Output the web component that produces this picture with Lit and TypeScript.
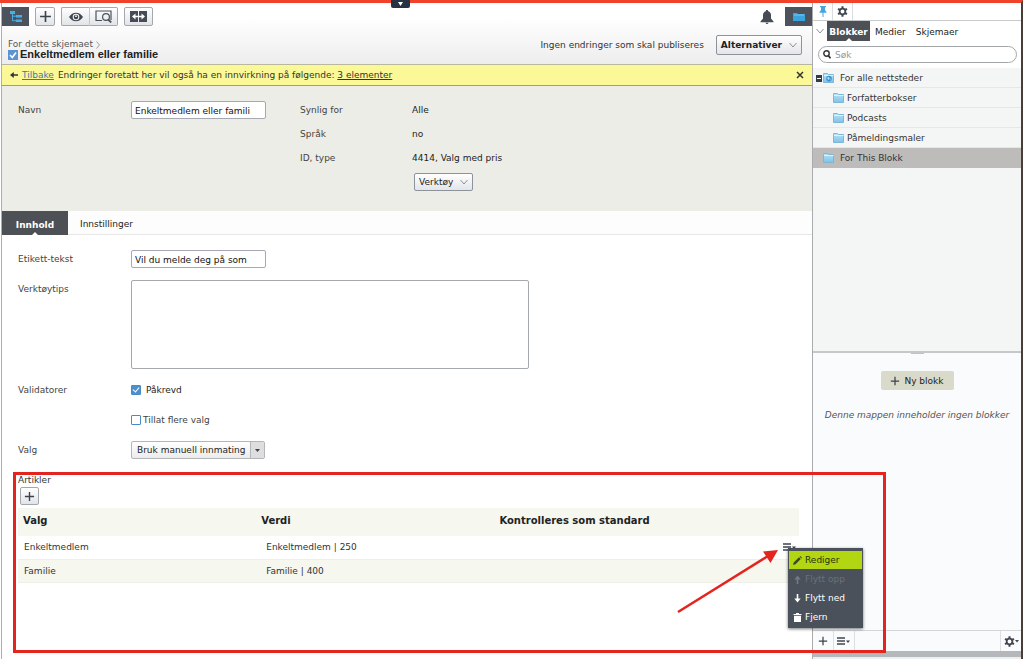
import { LitElement, html, css, svg } from "lit";
import { customElement, state } from "lit/decorators.js";
import { classMap } from "lit/directives/class-map.js";

const plus = (size: number) => html`<svg width=${size} height=${size} viewBox="0 0 12 12" aria-hidden="true"><path d="M6 1v10M1 6h10" stroke="#3c434b" stroke-width="1.5" fill="none"/></svg>`;
const chevron = html`<svg width="8" height="6" viewBox="0 0 8 6" aria-hidden="true"><path d="M.5 1L4 5 7.5 1" fill="none" stroke="#8d9095"/></svg>`;
const gear = html`<svg width="11" height="11" viewBox="-6 -6 12 12" aria-hidden="true"><circle r="3.1" fill="none" stroke="#3f4650" stroke-width="1.9"/><path d="M0-5.600v2.200M0 5.600V3.400M-4.850-2.800l1.900 1.100M4.850 2.800l-1.900-1.100M4.850-2.800l-1.900 1.100M-4.850 2.800l1.900-1.100" stroke="#3f4650" stroke-width="2.200"/></svg>`;
const lines = html`<svg width="14" height="8" viewBox="0 0 14 8" aria-hidden="true"><path d="M0 1h8M0 4h8M0 7h8" stroke="#3f4650" stroke-width="1.400"/><path d="M9 3.500h4L11 6z" fill="#3f4650"/></svg>`;
const folder = (globe = false) => html`<svg width="12" height="10" viewBox="0 0 12 10" aria-hidden="true">
  <defs><linearGradient id="f" x2="0" y2="1"><stop stop-color="#b9e2f6"/><stop offset="1" stop-color="#7fc1e6"/></linearGradient></defs>
  <path d="M.5 1.500V.5h4l.8 1h5.200v8H.5z" fill="url(#f)" stroke="#7db6d6"/><path d="M1 2.500h9.500" stroke="#dff2fb"/>
  ${globe ? svg`<circle cx="6" cy="5.600" r="2.800" fill="#3f92cf"/><path d="M4 5l1.500-1 1.300 1.200L5.600 7zM7.400 5.600l.9.3-.7 1.100z" fill="#bfe3f5"/>` : ""}
</svg>`;

@customElement("app-root")
export class AppRoot extends LitElement {
  static styles = css`
    :host { display: block; font: 9px/12px "DejaVu Sans", Verdana, sans-serif; color: #333; }
    * { box-sizing: border-box; }
    svg { display: block; flex: none; }
    button, input, select, textarea { font: inherit; color: inherit; margin: 0; }
    button { display: flex; align-items: center; justify-content: center; gap: 6px; padding: 0; border: 0; background: none; white-space: nowrap; }
    a { color: inherit; text-decoration: none; }
    .page { position: relative; display: flex; min-height: 100vh; border-top: 3px solid #f0412a; border-right: 2px solid #493d38; background: #fff; }
    .handle { position: absolute; top: -3px; left: 391px; width: 19px; height: 8px; border-radius: 0 0 2px 2px; background: #263242; }
    .main { flex: 1; min-width: 0; margin-left: 1px; border-left: 1px solid #a9afb3; border-right: 1px solid #a9abad; }

    .header { height: 61px; padding-top: 4px; background: linear-gradient(#fff 25%, #ededee); }
    .bar { display: flex; align-items: center; gap: 6px; height: 19px; }
    .tool { width: 20px; height: 19px; border: 1px solid #a3a8ae; border-radius: 2px; background: linear-gradient(#fff, #e2e4e8); }
    .wide { width: 29px; }
    .dark { width: 27px; height: 19px; background: #4c535d; }
    .pair { display: flex; }
    .pair .tool:first-child { border-right-color: #c4c7cc; border-radius: 2px 0 0 2px; }
    .pair .tool:last-child { width: 28px; border-left: 0; border-radius: 0 2px 2px 0; }
    .push { margin-left: auto; margin-right: 5px; }
    .titles { display: flex; align-items: flex-end; justify-content: space-between; padding: 0 10px 0 6px; height: 34px; }
    .crumb { display: flex; align-items: center; gap: 3px; line-height: 9px; color: #555; }
    .title { display: flex; align-items: center; gap: 2px; margin: 0; font: bold 11px/11px "Liberation Sans", Arial, sans-serif; color: #222; }
    .status { display: flex; align-items: center; gap: 12px; padding-bottom: 5px; }
    .btn { height: 18px; padding: 0 4px; gap: 7px; border: 1px solid #8d939b; border-radius: 2px; background: linear-gradient(#fff, #e4e5ea); color: #222; }
    .large { height: 20px; font-weight: bold; }

    .notice { display: flex; align-items: center; gap: 4px; height: 22px; padding: 0 8px; border: solid #b9b89c; border-width: 1px 0; border-bottom-color: #9c9d8c; background: #fbf897; }
    .notice a { text-decoration: underline; }
    .notice .back { color: #3d77a8; }
    .notice .close { margin-left: auto; }

    .props { display: grid; grid-template-columns: 113px 169px 112px 1fr; padding: 12px 16px 16px; min-height: 125px; align-items: center; grid-auto-rows: 24px; background: #ecede7; color: #444; }
    .props .value { color: #222; }
    .props .verktoy { grid-column: 4; justify-self: start; margin-left: 2px; }
    .text { width: 135px; height: 18px; padding: 1px 3px 0; border: 1px solid #a5a9b3; border-radius: 2px; background: #fff; color: #111; outline: 0; }

    .tabs { display: flex; height: 24px; border-bottom: 1px solid #e6e6e6; background: #fdfdfd; margin-bottom: 15px; }
    .tab { position: relative; padding: 3px 12px 0; color: #222; }
    .main .on { width: 66px; height: 24px; padding-top: 3px; background: #4d5055; color: #fff; font-weight: bold; }
    .on::after { content: ""; position: absolute; bottom: 0; left: 50%; margin-left: -3px; border: 3px solid transparent; border-top: 0; border-bottom-color: #fff; }

    .form { display: grid; grid-template-columns: 113px 1fr; padding: 0 16px; row-gap: 12px; color: #444; }
    .form > * { min-height: 18px; }
    .lab { line-height: 18px; }
    textarea { width: 398px; height: 89px; padding: 3px; border: 1px solid #a5a9ad; border-radius: 2px; resize: none; display: block; background: #fff; }
    .check { display: flex; align-items: center; gap: 5px; color: #222; }
    .tight { gap: 2px; color: #444; }
    .box { appearance: none; position: relative; width: 10px; height: 10px; border: 1px solid #4a8ac6; background: #fff; border-radius: 1px; flex: none; }
    .box:checked { background: #4b90cf; }
    .box:checked::after { content: ""; position: absolute; left: 2px; top: 0; width: 3px; height: 5px; border: solid #fff; border-width: 0 1px 1px 0; transform: rotate(40deg); }
    .pick { position: relative; justify-self: start; display: flex; }
    .pick select { appearance: none; width: 134px; height: 18px; padding: 0 15px 0 5px; border: 1px solid #b4b5b8; border-radius: 2px; background: linear-gradient(#fff, #ececec); color: #222; }
    .pick svg { position: absolute; right: 1px; top: 1px; pointer-events: none; }

    .items { padding: 15px 13px 0 16px; color: #333; }
    .add { height: 18px; width: 19px; margin: 1px 0 3px 2px; }
    table { width: 100%; border-collapse: collapse; table-layout: fixed; }
    th { height: 28px; padding: 0 5px 3px; text-align: left; font-size: 10px; color: #222; background: #f6f7ef; }
    td { height: 23px; padding: 0 6px; border-bottom: 1px solid #efefe8; }
    td + td { padding-left: 10px; }
    td:last-child { padding-right: 2px; }
    tr:nth-child(2) td { background: #f6f7ef; }
    td:last-child button { margin-left: auto; }

    .side { width: 208px; flex: none; display: flex; flex-direction: column; background: #fff; }
    .icons { display: flex; height: 18px; border-bottom: 1px solid #c8cacb; }
    .icons button { width: 20px; border-right: 1px solid #dadcdd; }
    .sidetabs { display: flex; align-items: stretch; height: 20px; color: #222; }
    .sidetabs .more { width: 14px; }
    .sidetabs .tab { padding: 2px 5px 0; }
    .sidetabs .cur { width: 43px; padding: 2px 0 0; background: #4d5055; color: #fff; font-weight: bold; }
    .search { display: flex; align-items: center; gap: 4px; height: 17px; margin: 5px 4px 5px 5px; padding: 0 4px; border: 1px solid #a4a7aa; border-radius: 9px; background: #fff; }
    .search input { border: 0; outline: 0; background: none; padding: 0; flex: 1; min-width: 0; }
    .search input::placeholder { color: #999; opacity: 1; }
    .tree { height: 285px; margin: 0; padding: 0; list-style: none; background: #f4f5f5; border-bottom: 2px solid #c5c8c9; }
    .node { display: flex; align-items: center; gap: 5px; height: 20px; padding: 1px 0 0 10px; border-bottom: 1px solid #e6e8e8; }
    .root { padding-left: 3px; gap: 0; }
    .root .label { margin-left: 5px; }
    .child { padding-left: 20px; gap: 2px; }
    .sel { background: #bdbcbb; border-color: #bdbcbb; }
    .pane { flex: 1; display: flex; flex-direction: column; align-items: center; background: #f9fbfc; }
    .grip { width: 13px; height: 1px; background: #c0c3c5; }
    .new { margin-top: 17px; width: 73px; height: 19px; border-radius: 2px; background: #dadaca; color: #222; gap: 4px; }
    .empty { margin: 19px 0 0; font-style: italic; color: #555; white-space: nowrap; }
    .foot { display: flex; height: 21px; border-top: 1px solid #d4d7d9; background: #f9fbfc; }
    .foot button { width: 21px; border-right: 1px solid #dde0e1; gap: 0; }
    .foot button:last-child { margin-left: auto; border: 0; border-left: 1px solid #dde0e1; }
    .strip { height: 8px; border-bottom: 2px solid #eceeef; background: #b4b8ba; }

    .menu { position: absolute; left: 788px; top: 545px; width: 75px; padding: 3px 1px 1px; background: #4a515b; box-shadow: 0 1px 3px #0008; }
    .menu button { width: 100%; height: 18px; justify-content: flex-start; gap: 3px; padding-left: 4px; color: #fff; margin-bottom: 1px; }
    .menu .hot { background: #b2d611; color: #26330a; }
    .menu .off { color: #6a717a; }
    .frame { position: absolute; left: 13px; top: 469px; width: 873px; height: 181px; border: 3px solid #e3241f; pointer-events: none; }
    .arrow { position: absolute; left: 676px; top: 546px; pointer-events: none; }
  `;

  @state() private tab = "Innhold";

  private pick(name: string) { this.tab = name; }

  render() {
    return html`
      <div class="page">
        <main class="main">
          <header class="header">
            <div class="bar">
              <button class="dark" aria-label="Navigasjon"><svg width="14" height="13" viewBox="0 0 14 13"><path d="M1 1h5v3H1zM7 5h6v2.500H7zM7 9.500h6V12H7z" fill="#48aee6"/><path d="M3.500 3v7.700H7M3.500 6.200H7" fill="none" stroke="#48aee6"/></svg></button>
              <button class="tool" aria-label="Legg til">${plus(13)}</button>
              <div class="pair">
                <button class="tool wide" aria-label="Vis"><svg width="14" height="10" viewBox="0 0 16 10"><path fill="#3f4650" fill-rule="evenodd" d="M0 5C4-1.500 12-1.500 16 5 12 11.500 4 11.500 0 5zm8-3.800a3.800 3.800 0 1 0 0 7.600 3.800 3.800 0 0 0 0-7.600z"/><circle cx="8" cy="5" r="2.600" fill="#3f4650"/><circle cx="8" cy="4" r="1" fill="#fff"/></svg></button>
                <button class="tool" aria-label="Forhåndsvis"><svg width="18" height="13" viewBox="0 0 18 13" fill="none" stroke="#4b525c" stroke-width="1.200"><path d="M7 10.500H1V1h15v9"/><circle cx="11" cy="7" r="3.400"/><path d="M13.200 9.500l3 3" stroke-width="1.800"/></svg></button>
              </div>
              <button class="tool wide" aria-label="Sammenlign"><svg width="17" height="11" viewBox="0 0 17 11"><path d="M0 0h8v11H0zM9 0h8v11H9z" fill="#454c56"/><path d="M8 5.500H3.500M9 5.500h4.500" stroke="#fff" stroke-width="1.600"/><path d="M2 5.500L5.500 2.500v6zM15 5.500L11.500 2.500v6z" fill="#fff"/></svg></button>
              <button class="push" aria-label="Varsler"><svg width="14" height="14" viewBox="0 0 14 14"><path fill="#454c56" d="M7 0c.8 0 1.200.5 1.200 1.200C10 1.800 11 3.200 11 5v3.500l2.500 3v.7H.5v-.7l2.500-3V5c0-1.800 1-3.200 2.800-3.800C5.800.5 6.200 0 7 0zM5.600 12.700h2.800a1.400 1.300 0 0 1-2.800 0z"/></svg></button>
              <button class="dark" aria-label="Ressurser"><svg width="12" height="10" viewBox="0 0 12 10"><path fill="#3ba4df" d="M0 1h4l1 1h7v7H0z"/><path d="M1 3h10" stroke="#7dc8f0"/></svg></button>
            </div>
            <div class="titles">
              <div>
                <div class="crumb">For dette skjemaet <svg width="4" height="8" viewBox="0 0 4 8"><path d="M.5.5L3.500 4 .5 7.500" fill="none" stroke="#888" stroke-width=".8"/></svg></div>
                <h1 class="title"><svg width="10" height="10" viewBox="0 0 10 10"><path fill="#5b94d1" d="M0 0h10v10H0z"/><path d="M2 5l2.300 2.500L8 2.500" fill="none" stroke="#fff" stroke-width="1.700"/></svg>Enkeltmedlem eller familie</h1>
              </div>
              <div class="status"><span>Ingen endringer som skal publiseres</span><button class="btn large">Alternativer ${chevron}</button></div>
            </div>
          </header>

          <div class="notice">
            <svg width="8" height="6" viewBox="0 0 8 6"><path d="M8 3H2" stroke="#333" stroke-width="1.500"/><path d="M0 3L3.800 0v6z" fill="#333"/></svg>
            <a class="back" href="#">Tilbake</a><span>Endringer foretatt her vil også ha en innvirkning på følgende: <a href="#">3 elementer</a></span>
            <button class="close" aria-label="Lukk"><svg width="8" height="8" viewBox="0 0 8 8"><path d="M1 1l6 6M7 1L1 7" stroke="#333" stroke-width="1.500"/></svg></button>
          </div>

          <section class="props">
            <label for="navn">Navn</label><input id="navn" class="text" value="Enkeltmedlem eller famili">
            <span>Synlig for</span><span class="value">Alle</span>
            <span></span><span></span><span>Språk</span><span class="value">no</span>
            <span></span><span></span><span>ID, type</span><span class="value">4414, Valg med pris</span>
            <button class="btn verktoy">Verktøy ${chevron}</button>
          </section>

          <nav class="tabs">
            ${["Innhold", "Innstillinger"].map((t) => html`<button class=${classMap({ tab: true, on: this.tab === t })} @click=${() => this.pick(t)}>${t}</button>`)}
          </nav>

          <div class="form">
            <label class="lab" for="etikett">Etikett-tekst</label><input id="etikett" class="text" value="Vil du melde deg på som">
            <label class="lab" for="tips">Verktøytips</label><textarea id="tips"></textarea>
            <span class="lab">Validatorer</span><label class="check"><input class="box" type="checkbox" checked>Påkrevd</label>
            <span></span><label class="check tight"><input class="box" type="checkbox">Tillat flere valg</label>
            <label class="lab" for="valg">Valg</label>
            <div class="pick"><select id="valg"><option>Bruk manuell innmating</option></select><svg width="14" height="16" viewBox="0 0 14 16"><path d="M0 0h14v16H0z" fill="#dedede"/><path d="M.5 0v16" stroke="#b4b5b8"/><path d="M5 7h5l-2.500 3z" fill="#444"/></svg></div>
          </div>

          <section class="items">
            <div>Artikler</div>
            <button class="tool add" aria-label="Legg til artikkel">${plus(11)}</button>
            <table>
              <colgroup><col style="width:30.500%"><col style="width:30.500%"><col></colgroup>
              <thead><tr><th>Valg</th><th>Verdi</th><th>Kontrolleres som standard</th></tr></thead>
              <tbody>
                <tr><td>Enkeltmedlem</td><td>Enkeltmedlem | 250</td><td><button aria-label="Meny">${lines}</button></td></tr>
                <tr><td>Familie</td><td>Familie | 400</td><td></td></tr>
              </tbody>
            </table>
          </section>
        </main>

        <aside class="side">
          <div class="icons">
            <button aria-label="Fest"><svg width="8" height="11" viewBox="0 0 8 11"><path fill="#48a5dc" d="M1 0h6v1.200H6V4l1.500 2v.8h-3V11h-1V6.800h-3V6L2 4V1.200H1z"/></svg></button>
            <button aria-label="Innstillinger">${gear}</button>
          </div>
          <nav class="sidetabs">
            <button class="more" aria-label="Flere">${chevron}</button>
            <button class="tab on cur">Blokker</button><button class="tab">Medier</button><button class="tab">Skjemaer</button>
          </nav>
          <label class="search"><svg width="8" height="9" viewBox="0 0 8 9"><circle cx="3.500" cy="3.500" r="2.700" fill="none" stroke="#333" stroke-width="1.400"/><path d="M5.300 5.600L7.500 8.300" stroke="#333" stroke-width="1.700"/></svg><input type="search" placeholder="Søk" aria-label="Søk"></label>
          <ul class="tree">
            <li class="node root"><svg width="7" height="7" viewBox="0 0 7 7"><path d="M0 0h6v7H0z" fill="#343b45"/><path d="M1 3.500h4" stroke="#fff"/></svg>${folder(true)}<span class="label">For alle nettsteder</span></li>
            ${["Forfatterbokser", "Podcasts", "Påmeldingsmaler"].map((n) => html`<li class="node child">${folder()}<span>${n}</span></li>`)}
            <li class="node sel">${folder()}<span>For This Blokk</span></li>
          </ul>
          <div class="pane">
            <div class="grip"></div>
            <button class="new">${plus(10)}Ny blokk</button>
            <p class="empty">Denne mappen inneholder ingen blokker</p>
          </div>
          <div class="foot"><button aria-label="Ny">${plus(10)}</button><button aria-label="Liste">${lines}</button><button aria-label="Valg">${gear}<svg width="4" height="3" viewBox="0 0 4 3"><path d="M0 0h4L2 2.500z" fill="#3f4650"/></svg></button></div>
          <div class="strip"></div>
        </aside>

        <button class="handle" aria-label="Vis meny"><svg width="5" height="4" viewBox="0 0 5 4"><path d="M0 0h5L2.500 4z" fill="#fff"/></svg></button>
        <div class="menu" role="menu">
          <button class="hot" role="menuitem"><svg width="9" height="9" viewBox="0 0 9 9"><path d="M0 9l.7-2.500L6 1.200l1.800 1.800-5.300 5.300zM6.600.6l.6-.5L9 1.800l-.6.6z" fill="#3b4a1e"/></svg>Rediger</button>
          <button class="off" role="menuitem" disabled><svg width="9" height="9" viewBox="0 0 9 9"><path d="M3.700 9V4.500H1.300L4.500.5l3.200 4H5.300V9z" fill="#737a82"/></svg>Flytt opp</button>
          <button role="menuitem"><svg width="9" height="9" viewBox="0 0 9 9"><path d="M3.700 0v4.500H1.300l3.200 4 3.200-4H5.300V0z" fill="#fff"/></svg>Flytt ned</button>
          <button role="menuitem"><svg width="9" height="9" viewBox="0 0 9 9"><path d="M.5 1H3V0h3v1h2.500v1h-8zM1 2.700h7V9H1z" fill="#fff"/></svg>Fjern</button>
        </div>
        <div class="frame"></div>
        <svg class="arrow" width="104" height="68" viewBox="0 0 104 68" aria-hidden="true"><path d="M2 63L92 7" stroke="#e3241f" stroke-width="2.600"/><path d="M102 1L94.500 14 87 2.500z" fill="#e3241f"/></svg>
      </div>`;
  }
}
